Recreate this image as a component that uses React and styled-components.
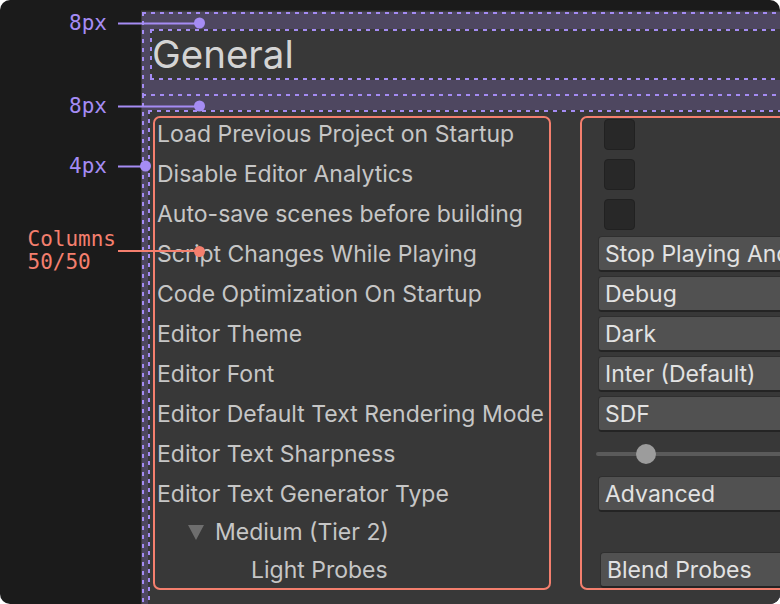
import React from "react";
import styled, { createGlobalStyle, css } from "styled-components";

const Global = createGlobalStyle`
  html, body { margin: 0; padding: 0; background: #ffffff; }
  body { font-family: Inter, "Noto Sans", sans-serif; }
`;

const LAV = "#a58cf4";
const SALMON = "#f47f6e";

const dashed = (c) => css`
  background-image:
    repeating-linear-gradient(90deg, ${c} 0 4px, transparent 4px 9px),
    repeating-linear-gradient(90deg, ${c} 0 4px, transparent 4px 9px),
    repeating-linear-gradient(180deg, ${c} 0 4px, transparent 4px 9px),
    repeating-linear-gradient(180deg, ${c} 0 4px, transparent 4px 9px);
  background-size: 100% 2px, 100% 2px, 2px 100%, 2px 100%;
  background-position: left top, left bottom, left top, right top;
  background-repeat: no-repeat;
`;

const Frame = styled.div`
  position: relative;
  width: 780px;
  height: 604px;
  display: flex;
  background: #1b1b1b;
  border-radius: 10px;
  overflow: hidden;
`;

const Gutter = styled.div`
  width: 141px;
  flex-shrink: 0;
`;

const Panel = styled.div`
  flex-shrink: 0;
  margin-top: 11px;
  background: #383838;
  box-shadow: 0 -1px 0 #2a2a2a;
`;

const HeaderMargin = styled.div`
  margin: 1px 0 0 1px;
  padding: 17px 8px 16px 8px;
  background-color: #4e4760;
  ${dashed(LAV)}
`;

const Header = styled.div`
  height: 51px;
  box-sizing: border-box;
  padding: 0 2px 2px;
  display: flex;
  align-items: center;
  background-color: #383838;
  ${dashed(LAV)}
  font-size: 38.5px;
  color: #d4d4d4;
`;

const ColumnsMargin = styled.div`
  margin: -2px 0 0 1px;
  padding: 16px 8px 0 6px;
  background-color: #4e4760;
  ${dashed(LAV)}
  background-size: 100% 2px, 100% 0, 2px 100%, 2px 100%;
`;

const ContentBox = styled.div`
  padding: 6px 4px 20px 5px;
  background-color: #383838;
  ${dashed(LAV)}
  background-size: 100% 2px, 100% 0, 2px 100%, 2px 100%;
`;

const Columns = styled.div`
  display: grid;
  grid-template-columns: 398px 398px;
  column-gap: 29px;
`;

const Column = styled.div`
  height: 474px;
  box-sizing: border-box;
  border-radius: 7px;
  box-shadow: inset 0 0 0 2px ${SALMON};
  display: flex;
  flex-direction: column;
  gap: 4px;
  padding: ${(p) => (p.$right ? "0 16px" : "0 4px")};
  overflow: hidden;
`;

const Row = styled.div`
  height: ${(p) => p.$h || 36}px;
  flex-shrink: 0;
  display: flex;
  align-items: center;
  padding-left: ${(p) => p.$indent || 0}px;
  gap: 11px;
`;

const Label = styled.span`
  font-size: 23px;
  color: #c6c6c6;
  white-space: nowrap;
`;

const Check = styled.div`
  width: 31px;
  height: 31px;
  box-sizing: border-box;
  margin-left: 8px;
  border-radius: 4px;
  background: #282828;
  border: 1px solid #212121;
`;

const Dropdown = styled.div`
  flex: 1;
  height: 36px;
  box-sizing: border-box;
  margin-left: ${(p) => p.$ml ?? 2}px;
  padding-left: 6px;
  display: flex;
  align-items: center;
  border-radius: 4px;
  background: #515151;
  border: 1px solid #2f2f2f;
  border-bottom: 2px solid #242424;
  font-size: 23px;
  color: #e2e2e2;
  white-space: nowrap;
  overflow: hidden;
`;

const Track = styled.div`
  position: relative;
  flex: 1;
  height: 4px;
  border-radius: 2px;
  background: #5a5a5a;
`;

const Thumb = styled.div`
  position: absolute;
  top: 50%;
  left: 40px;
  width: 20px;
  height: 20px;
  border-radius: 50%;
  background: #9c9c9c;
  transform: translateY(-50%);
`;

const Callout = styled.div`
  position: absolute;
  left: 0;
  top: ${(p) => p.$y}px;
  width: ${(p) => p.$x + 5}px;
  transform: translateY(-50%);
  display: flex;
  justify-content: flex-end;
  align-items: center;
  z-index: 2;
  color: ${(p) => p.$c};
`;

const Tag = styled.div`
  font-family: "DejaVu Sans Mono", "Liberation Mono", monospace;
  font-size: 21px;
  line-height: 23px;
  white-space: pre;
  margin-right: ${(p) => p.$gap}px;
`;

const Line = styled.div`
  height: 2px;
  width: ${(p) => p.$w}px;
  background: currentColor;
`;

const Dot = styled.div`
  width: 11px;
  height: 11px;
  margin-left: -6px;
  border-radius: 50%;
  background: currentColor;
`;

const Tri = () => (
  <svg width="16" height="15" viewBox="0 0 16 15">
    <polygon points="0,0 16,0 8,15" fill="#6e6e6e" />
  </svg>
);

const labels = [
  "Load Previous Project on Startup",
  "Disable Editor Analytics",
  "Auto-save scenes before building",
  "Script Changes While Playing",
  "Code Optimization On Startup",
  "Editor Theme",
  "Editor Font",
  "Editor Default Text Rendering Mode",
  "Editor Text Sharpness",
  "Editor Text Generator Type",
];

const mark = (x, y, c, text, gap) => (
  <Callout $x={x} $y={y} $c={c}>
    <Tag $gap={gap}>{text}</Tag>
    <Line $w={x - 118} />
    <Dot />
  </Callout>
);

export default function App() {
  return (
    <>
      <Global />
      <Frame>
        <Gutter />
        <Panel>
          <HeaderMargin>
            <Header>General</Header>
          </HeaderMargin>
          <ColumnsMargin>
            <ContentBox>
              <Columns>
                <Column>
                  {labels.map((l) => (
                    <Row key={l}>
                      <Label>{l}</Label>
                    </Row>
                  ))}
                  <Row $h={32} $indent={31}>
                    <Tri />
                    <Label>Medium (Tier 2)</Label>
                  </Row>
                  <Row $indent={94}>
                    <Label>Light Probes</Label>
                  </Row>
                </Column>
                <Column $right>
                  <Row><Check /></Row>
                  <Row><Check /></Row>
                  <Row><Check /></Row>
                  <Row><Dropdown>Stop Playing And Recompile</Dropdown></Row>
                  <Row><Dropdown>Debug</Dropdown></Row>
                  <Row><Dropdown>Dark</Dropdown></Row>
                  <Row><Dropdown>Inter (Default)</Dropdown></Row>
                  <Row><Dropdown>SDF</Dropdown></Row>
                  <Row>
                    <Track>
                      <Thumb />
                    </Track>
                  </Row>
                  <Row><Dropdown>Advanced</Dropdown></Row>
                  <Row $h={32} />
                  <Row><Dropdown $ml={4}>Blend Probes</Dropdown></Row>
                </Column>
              </Columns>
            </ContentBox>
          </ColumnsMargin>
        </Panel>
        {mark(200, 23, LAV, "8px", 11)}
        {mark(200, 106, LAV, "8px", 11)}
        {mark(146, 166, LAV, "4px", 11)}
        {mark(200, 251, SALMON, "Columns\n50/50", 2)}
      </Frame>
    </>
  );
}
